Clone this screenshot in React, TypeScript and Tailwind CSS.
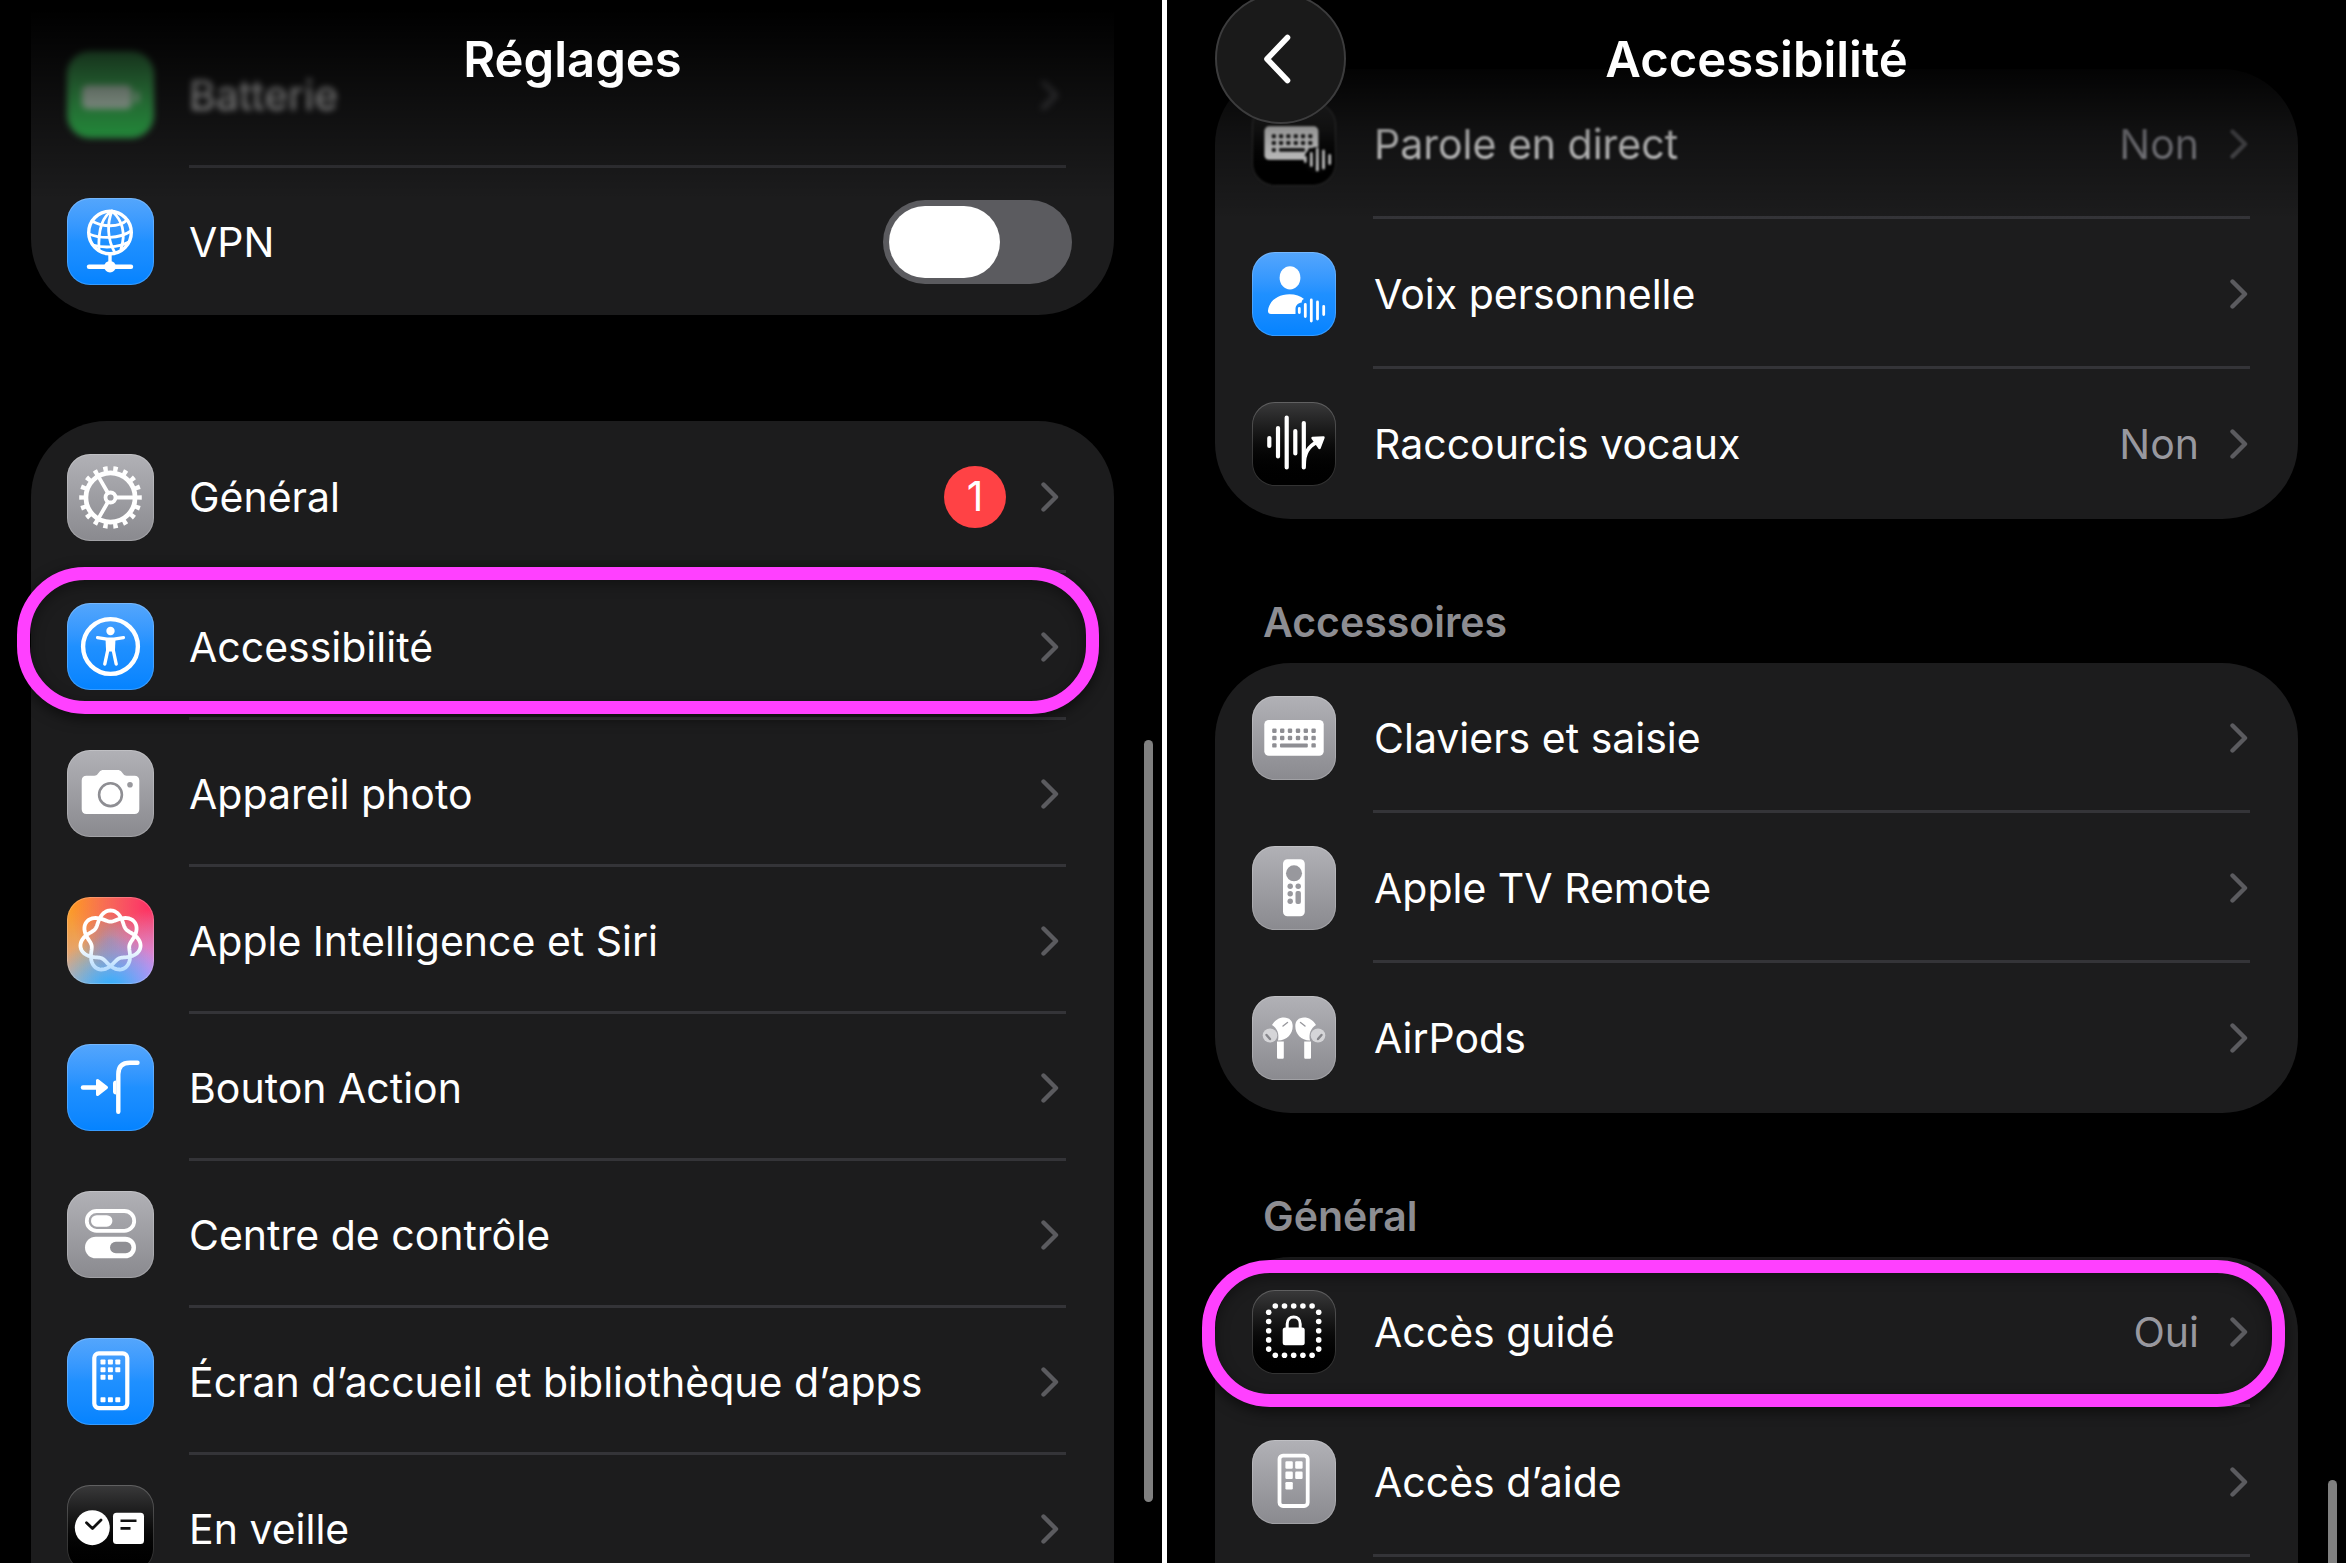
import clsx from 'clsx';
import type { ReactNode } from 'react';

type Tone = 'gray' | 'blue' | 'black' | 'green' | 'siri';

const TONES: Record<Tone, string> = {
    gray: 'bg-linear-to-b from-[#b1b1b6] to-[#8a8a8f]',
    blue: 'bg-linear-to-b from-[#54a6fc] via-[#1f90ff] to-[#0483ff]',
    black: 'bg-linear-to-b from-[#3a3a3b] via-[#0c0c0c] to-black',
    green: 'bg-linear-to-b from-[#5bd675] to-[#30c552]',
    siri: 'bg-[radial-gradient(circle_at_50%_110%,#1fb0ff_0%,transparent_55%),radial-gradient(circle_at_100%_100%,#d58bff_0%,transparent_60%),radial-gradient(circle_at_50%_50%,#b08a98_0%,transparent_45%),radial-gradient(circle_at_95%_10%,#ff2f63_0%,transparent_70%),radial-gradient(circle_at_5%_5%,#ff9a1f_0%,transparent_75%),linear-gradient(#e0a080,#c8b4c4)]',
};

// seven-lobed closed curve, it goes round twice before it meets itself
const KNOT = Array.from({ length: 240 }, (_, i) => {
    const t = (i / 240) * Math.PI * 4;
    const r = 25 + 5.6 * Math.cos(3.5 * t);
    const x = 43.5 + r * Math.sin(t);
    const y = 44 - r * Math.cos(t);
    return `${i === 0 ? 'M' : 'L'}${x.toFixed(2)} ${y.toFixed(2)}`;
}).join('') + 'Z';

function Glyph({ size = 84, children }: { size?: number; children: ReactNode }) {
    return (
        <svg
            viewBox={`0 0 ${size} ${size}`}
            className="size-full"
            fill="none"
            stroke="#fff"
            strokeLinecap="round"
            strokeLinejoin="round"
            aria-hidden={true}
        >
            {children}
        </svg>
    );
}

const BatteryIcon = () => (
    <Glyph size={87}>
        <g opacity="0.8">
            <rect x="15" y="34" width="50" height="24" rx="6" fill="#fff" stroke="none" />
            <path d="M70 42v8" strokeWidth="4" />
        </g>
    </Glyph>
);

const VpnIcon = () => (
    <Glyph size={87}>
        <g strokeWidth="2.8">
            <circle cx="43" cy="34.5" r="21.3" strokeWidth="3.4" />
            <path d="M45 13C36 18 31 31 32 52M45 13c-5 12-5 28 3 42M45 13c10 9 14 22 9 38" />
            <path d="M25 23c10 6 27 7 35-1M22 36c12 5 30 5 42-3M26 47c10 3 24 3 36-3" />
        </g>
        <path d="M43 57v10" strokeWidth="3.4" />
        <path d="M22 68.7h42" strokeWidth="4.4" />
        <circle cx="43" cy="68.7" r="5.8" fill="#fff" stroke="none" />
    </Glyph>
);

const GearIcon = () => (
    <Glyph size={87}>
        <circle
            cx="43.5"
            cy="43.5"
            r="28.6"
            strokeWidth="5.4"
            strokeLinecap="butt"
            pathLength="180"
            strokeDasharray="4.4 5.6"
            strokeDashoffset="2.2"
        />
        <circle cx="43.5" cy="43.5" r="24.6" strokeWidth="4.8" />
        <circle cx="43.5" cy="43.5" r="5" strokeWidth="3.8" />
        <path d="M49 43.5h18M40.8 38.7l-9-15.6M40.8 48.3l-9 15.6" strokeWidth="3.8" />
    </Glyph>
);

const AccessibilityIcon = () => (
    <Glyph size={87}>
        <circle cx="43.5" cy="43.5" r="27.4" strokeWidth="4.4" />
        <circle cx="43.5" cy="28" r="4.2" fill="#fff" stroke="none" />
        <path d="M30.5 34.6l9.5 1.6h7l9.5-1.6" strokeWidth="3.2" />
        <path d="M38.5 35.5h10l-.6 13h-8.8z" fill="#fff" stroke="none" />
        <path d="M41 46l-3.2 15M46 46l3.2 15" strokeWidth="3.4" />
    </Glyph>
);

const CameraIcon = () => (
    <Glyph size={87}>
        <path
            d="M19.5 25.7h8c1.5 0 2.3-.6 3.2-1.7l1.6-2c1.2-1.5 2.5-2 4.4-2h13.6c1.9 0 3.2.5 4.4 2l1.6 2c.9 1.1 1.7 1.7 3.2 1.7h8c3 0 4.8 1.8 4.8 4.8v28.7c0 3-1.8 4.8-4.8 4.8h-48c-3 0-4.8-1.8-4.8-4.8V30.5c0-3 1.8-4.8 4.8-4.8z"
            fill="#fff"
            stroke="none"
        />
        <circle cx="43.5" cy="44.7" r="11.4" stroke="#8e8e93" strokeWidth="2.6" />
        <circle cx="63" cy="34.7" r="2.8" fill="#98989d" stroke="none" />
    </Glyph>
);

const SiriIcon = () => (
    <Glyph size={87}>
        <defs>
            <linearGradient id="knot" x1="0" y1="0" x2="0" y2="1">
                <stop offset="0.6" stopColor="#fff" />
                <stop offset="1" stopColor="#b5dcff" />
            </linearGradient>
        </defs>
        <path d={KNOT} stroke="url(#knot)" strokeWidth="3.8" />
    </Glyph>
);

const ActionIcon = () => (
    <Glyph size={87}>
        <path d="M16 43.5h18" strokeWidth="4.4" />
        <path d="M30.5 36.5v14l9-7z" fill="#fff" strokeWidth="3" />
        <path d="M70.5 18.7H63c-8 0-11.7 4-11.7 11.5v37.6" strokeWidth="4.4" />
        <path d="M49 36.5c-2 0-3 1.2-3 3v8c0 1.8 1 3 3 3z" fill="#fff" stroke="none" />
    </Glyph>
);

const ControlIcon = () => (
    <Glyph size={87}>
        <rect x="19.8" y="20" width="47.4" height="19.8" rx="9.9" strokeWidth="3.8" />
        <rect x="24" y="24.2" width="21.4" height="11.5" rx="5.7" fill="#fff" stroke="none" />
        <rect x="18" y="45.7" width="51" height="21.6" rx="10.8" fill="#fff" stroke="none" />
        <rect x="43" y="50.7" width="21.5" height="11.6" rx="5.8" fill="#8f8f94" stroke="none" />
    </Glyph>
);

const HomeScreenIcon = () => (
    <Glyph size={87}>
        <rect x="27.3" y="15.3" width="33" height="54.8" rx="4.5" strokeWidth="4.2" />
        <g fill="#fff" stroke="none">
            {[24, 31.7, 39.3, 61.7].map((y, row) =>
                [36, 43.4, 50.8].map((x, col) =>
                    row === 2 && col === 2 ? null : (
                        <rect key={`${x}-${y}`} x={x - 2.5} y={y - 2.5} width="5" height="5" rx="0.8" />
                    ),
                ),
            )}
        </g>
    </Glyph>
);

const StandByIcon = () => (
    <Glyph size={87}>
        <circle cx="25.3" cy="42.7" r="17.5" fill="#fff" stroke="none" />
        <path d="M19.5 37.8l6 5.7 8.5-8.5" stroke="#111" strokeWidth="2.8" />
        <rect x="46" y="27.7" width="31" height="31.3" rx="3.5" fill="#fff" stroke="none" />
        <path d="M53.5 35.7h16M53.5 43.4h10" stroke="#111" strokeWidth="2.6" strokeLinecap="butt" />
    </Glyph>
);

const SmallWave = () => (
    <path d="M47.3 56.5v4M53.3 52.5v12M59.3 48v21M65.5 50v17M71.7 54.5v8" strokeWidth="2.8" />
);

function Keys({ fill }: { fill: string }) {
    return (
        <g fill={fill} stroke="none">
            {[34.7, 42].map((y) =>
                [22.4, 30.2, 38, 46, 53.8, 61.6].map((x) => (
                    <rect key={`${x}-${y}`} x={x - 2.2} y={y - 2.2} width="4.4" height="4.4" rx="1.2" />
                )),
            )}
            <rect x="20.2" y="47.2" width="4.4" height="4.4" rx="1.2" />
            <rect x="28" y="47.4" width="27.8" height="4" rx="1" />
            <rect x="59.4" y="47.2" width="4.4" height="4.4" rx="1.2" />
        </g>
    );
}

const LiveSpeechIcon = () => (
    <Glyph>
        <g transform="translate(1 2) scale(.93)">
            <rect x="12.3" y="24" width="58" height="36" rx="5" fill="#fff" stroke="none" />
            <Keys fill="#222" />
        </g>
        <circle cx="65" cy="58" r="13" fill="#060606" stroke="none" />
        <g transform="translate(6 -1)">
            <SmallWave />
        </g>
    </Glyph>
);

const PersonalVoiceIcon = () => (
    <Glyph>
        <ellipse cx="38" cy="25.8" rx="10.4" ry="11.6" fill="#fff" stroke="none" />
        <path
            d="M16 58.5C17 49 26 42.3 37.5 42.3c6 0 11 1.8 14.5 4.7-1.5.5-2.3 1.8-2.3 3.5-3.5.3-6.2 3-6.2 6.5v5H19c-2 0-3.2-1.3-3-3.5z"
            fill="#fff"
            stroke="none"
        />
        <SmallWave />
    </Glyph>
);

const VocalShortcutsIcon = () => (
    <Glyph>
        <path d="M17.3 36v8M26 26v28.5M34.7 15.5v50M43.3 29v22.5M51.8 21v44.5" strokeWidth="4.2" />
        <path d="M52 63c0-12 4-18.5 13-23" strokeWidth="4" />
        <path d="M60.5 36l11-.5-4 10.5z" fill="#fff" strokeWidth="2.4" />
    </Glyph>
);

const KeyboardIcon = () => (
    <Glyph>
        <rect x="12.3" y="24" width="59.4" height="35.8" rx="4.5" fill="#fff" stroke="none" />
        <Keys fill="#8e8e93" />
    </Glyph>
);

const RemoteIcon = () => (
    <Glyph>
        <rect x="31" y="13.3" width="21.8" height="57" rx="4.5" fill="#fff" stroke="none" />
        <g fill="#98989d" stroke="none">
            <circle cx="42" cy="27.3" r="8" />
            <circle cx="38.2" cy="40.3" r="2.7" />
            <circle cx="46.2" cy="40.3" r="2.7" />
            <circle cx="38.2" cy="47.7" r="2.7" />
            <circle cx="38.2" cy="55.2" r="2.7" />
            <rect x="43.5" y="45" width="5.4" height="13" rx="2" />
        </g>
    </Glyph>
);

const Pod = () => (
    <>
        <path
            d="M20 29c3-5 7-7.5 12-7.5 5.5 0 8.7 3.5 8.7 8.5C40.7 38 35 44.5 26 44.5c1.5-7-1-12.5-6-15.5z"
            fill="#fff"
            stroke="none"
        />
        <path d="M25 45.5h6.8v15.7c0 1-.5 1.5-1.5 1.5h-3.8c-1 0-1.5-.5-1.5-1.5z" fill="#fff" stroke="none" />
        <ellipse cx="18" cy="39.5" rx="7.3" ry="7" fill="#d5d5d8" stroke="none" />
        <path d="M14.5 39l3.5 4" stroke="#85858a" strokeWidth="2.4" />
        <path d="M31 30l4.5-3.5" stroke="#98989d" strokeWidth="1.4" />
    </>
);

const AirPodsIcon = () => (
    <Glyph>
        <Pod />
        <g transform="translate(84 0) scale(-1 1)">
            <Pod />
        </g>
    </Glyph>
);

const GuidedAccessIcon = () => (
    <Glyph>
        <g fill="#fff" stroke="none">
            {[23.3, 32.5, 41.7, 50.9, 60.1].map((p) => (
                <g key={p}>
                    <circle cx={p} cy="16" r="2.8" />
                    <circle cx={p} cy="65.3" r="2.8" />
                    <circle cx="16.7" cy={p - 1} r="2.8" />
                    <circle cx="66.7" cy={p - 1} r="2.8" />
                </g>
            ))}
            <rect x="30.7" y="37.5" width="22" height="17.7" rx="2.5" />
        </g>
        <path d="M35.2 38v-4c0-4.5 2.7-7 6.5-7s6.5 2.5 6.5 7v4" strokeWidth="3" />
    </Glyph>
);

const AssistiveIcon = () => (
    <Glyph>
        <rect x="27.5" y="15.6" width="28.2" height="50.4" rx="3.5" strokeWidth="3.8" />
        <g fill="#fff" stroke="none">
            <rect x="33.4" y="21.3" width="7.4" height="7.4" rx="1.2" />
            <rect x="43.2" y="21.3" width="7.4" height="7.4" rx="1.2" />
            <rect x="33.4" y="31.6" width="7.4" height="7.4" rx="1.2" />
            <rect x="43.2" y="31.6" width="7.4" height="7.4" rx="1.2" />
            <rect x="33.4" y="42" width="7.4" height="7.4" rx="1.2" />
        </g>
    </Glyph>
);

function Chevron() {
    return (
        <svg viewBox="0 0 18 30" className="h-[30px] w-[18px] shrink-0" fill="none" aria-hidden={true}>
            <path
                d="M2.5 2.5L15 15 2.5 27.5"
                stroke="#5b5b5f"
                strokeWidth="4.4"
                strokeLinecap="round"
                strokeLinejoin="round"
            />
        </svg>
    );
}

function Tile({ tone, className, children }: { tone: Tone; className: string; children: ReactNode }) {
    return (
        <span
            className={clsx(
                'shrink-0 overflow-hidden rounded-[23px] shadow-[inset_0_0_0_1px_rgba(255,255,255,0.2)]',
                TONES[tone],
                className,
            )}
        >
            {children}
        </span>
    );
}

interface Item {
    label: string;
    tone: Tone;
    icon: ReactNode;
    badge?: number;
    value?: string;
    marked?: boolean;
    faded?: string;
    toggle?: boolean;
}

const ROW = 'relative flex items-center';
const LABEL = 'min-w-0 flex-1 truncate text-[41px] leading-[60px]';
const LINE = 'absolute right-12 bottom-0 left-[158px] h-[3px] bg-[#343438] group-last:hidden';
const MARK =
    'pointer-events-none absolute z-10 rounded-[68px] border-[13px] border-[#ff40ff] shadow-[0_4px_14px_rgba(0,0,0,0.6),inset_0_4px_14px_rgba(0,0,0,0.4)]';

function SettingsRow({ label, tone, icon, badge, marked, faded, toggle }: Item) {
    const Wrapper = toggle ? 'label' : 'a';

    return (
        <li className="group relative">
            <Wrapper
                href={toggle ? undefined : '#'}
                className={clsx(ROW, 'min-h-[147px] gap-[35px] pl-9', toggle ? 'pr-[42px]' : 'pr-[55px]', faded)}
            >
                <Tile tone={tone} className="size-[87px]">
                    {icon}
                </Tile>
                <span className={LABEL}>{label}</span>
                {badge !== undefined && (
                    <span className="py-[45px]">
                        <span className="flex size-[62px] items-center justify-center rounded-full bg-[#ff4245] text-[41px]">
                            {badge}
                        </span>
                    </span>
                )}
                {toggle ? (
                    <input
                        type="checkbox"
                        role="switch"
                        className="h-[84px] w-[189px] shrink-0 appearance-none rounded-full bg-[#5b5b5f] p-1.5 before:block before:h-[72px] before:w-[111px] before:rounded-full before:bg-white checked:bg-[#30d158] checked:before:ml-auto"
                    />
                ) : (
                    <Chevron />
                )}
            </Wrapper>
            <div className={LINE} />
            {marked && <div className={clsx(MARK, '-top-1.5 right-[15px] bottom-1.5 -left-3.5')} />}
        </li>
    );
}

function AccessRow({ label, tone, icon, value, marked, faded }: Item) {
    return (
        <li className="group relative">
            <a href="#" className={clsx(ROW, 'min-h-[150px] pr-[50px] pl-[37px]', faded)}>
                <Tile tone={tone} className="mr-[38px] size-[84px]">
                    {icon}
                </Tile>
                <span className={LABEL}>{label}</span>
                {value && <span className="mr-[31px] text-[41px] leading-[60px] text-[#98989f]">{value}</span>}
                <Chevron />
            </a>
            <div className={LINE} />
            {marked && <div className={clsx(MARK, 'top-[3px] right-[13px] bottom-0 -left-[13px]')} />}
        </li>
    );
}

const CONNECTIONS: Item[] = [
    { label: 'Batterie', tone: 'green', icon: <BatteryIcon />, faded: 'blur-[3px]' },
    { label: 'VPN', tone: 'blue', icon: <VpnIcon />, toggle: true },
];

const SETTINGS: Item[] = [
    { label: 'Général', tone: 'gray', icon: <GearIcon />, badge: 1 },
    { label: 'Accessibilité', tone: 'blue', icon: <AccessibilityIcon />, marked: true },
    { label: 'Appareil photo', tone: 'gray', icon: <CameraIcon /> },
    { label: 'Apple Intelligence et Siri', tone: 'siri', icon: <SiriIcon /> },
    { label: 'Bouton Action', tone: 'blue', icon: <ActionIcon /> },
    { label: 'Centre de contrôle', tone: 'gray', icon: <ControlIcon /> },
    { label: 'Écran d’accueil et bibliothèque d’apps', tone: 'blue', icon: <HomeScreenIcon /> },
    { label: 'En veille', tone: 'black', icon: <StandByIcon /> },
];

const SPEECH: Item[] = [
    { label: 'Parole en direct', tone: 'black', icon: <LiveSpeechIcon />, value: 'Non', faded: 'blur-[1px]' },
    { label: 'Voix personnelle', tone: 'blue', icon: <PersonalVoiceIcon /> },
    { label: 'Raccourcis vocaux', tone: 'black', icon: <VocalShortcutsIcon />, value: 'Non' },
];

const ACCESSORIES: Item[] = [
    { label: 'Claviers et saisie', tone: 'gray', icon: <KeyboardIcon /> },
    { label: 'Apple TV Remote', tone: 'gray', icon: <RemoteIcon /> },
    { label: 'AirPods', tone: 'gray', icon: <AirPodsIcon /> },
];

const GENERAL: Item[] = [
    { label: 'Accès guidé', tone: 'black', icon: <GuidedAccessIcon />, value: 'Oui', marked: true },
    { label: 'Accès d’aide', tone: 'gray', icon: <AssistiveIcon /> },
];

const CARD = 'bg-[#1c1c1d]';
const HEADER = 'pointer-events-none absolute inset-x-0 top-0 z-20 bg-linear-to-b from-black to-transparent pt-[30px]';
const TITLE = 'text-center text-[49px] leading-[60px] font-semibold';
const HEADING = 'px-12 pt-[73px] pb-[11px] text-[41px] leading-[60px] font-semibold text-[#8d8d92]';

function SettingsScreen() {
    return (
        <section className="relative overflow-hidden bg-black pr-12 pl-[31px]">
            <header className={clsx(HEADER, 'h-[200px] from-5% via-black/50 via-50% pr-12 pl-[31px]')}>
                <h1 className={TITLE}>Réglages</h1>
            </header>

            <ul className={clsx(CARD, 'rounded-b-[76px] pt-[21px]')}>
                {CONNECTIONS.map((item) => (
                    <SettingsRow key={item.label} {...item} />
                ))}
            </ul>

            <ul className={clsx(CARD, 'mt-[106px] rounded-t-[76px] pb-9')}>
                {SETTINGS.map((item) => (
                    <SettingsRow key={item.label} {...item} />
                ))}
            </ul>

            <div className="absolute top-[740px] right-[9px] h-[762px] w-[9px] rounded-full bg-[#808080]" />
        </section>
    );
}

function AccessibilityScreen() {
    return (
        <section className="relative overflow-hidden bg-black px-12 pt-[69px]">
            <header className={clsx(HEADER, 'h-[220px] from-25% via-black/40 via-60% px-12')}>
                <h1 className={TITLE}>Accessibilité</h1>
                <button
                    type="button"
                    aria-label="Retour"
                    className="pointer-events-auto absolute -top-[7px] left-12 flex size-[131px] items-center justify-center rounded-full border-2 border-[#3c3c3d] bg-[#1a1a1a]"
                >
                    <svg viewBox="0 0 28 50" className="mr-2 h-[50px] w-7" fill="none" aria-hidden={true}>
                        <path
                            d="M24.5 3.5L4 25l20.5 21.5"
                            stroke="#fff"
                            strokeWidth="5.6"
                            strokeLinecap="round"
                            strokeLinejoin="round"
                        />
                    </svg>
                </button>
            </header>

            <ul className={clsx(CARD, 'rounded-[76px]')}>
                {SPEECH.map((item) => (
                    <AccessRow key={item.label} {...item} />
                ))}
            </ul>

            <h2 className={HEADING}>Accessoires</h2>
            <ul className={clsx(CARD, 'rounded-[76px]')}>
                {ACCESSORIES.map((item) => (
                    <AccessRow key={item.label} {...item} />
                ))}
            </ul>

            <h2 className={HEADING}>Général</h2>
            <ul className={clsx(CARD, 'rounded-t-[76px]')}>
                {GENERAL.map((item) => (
                    <AccessRow key={item.label} {...item} />
                ))}
                <li className="h-[150px]" />
            </ul>

            <div className="absolute top-[1480px] right-[9px] h-[300px] w-[9px] rounded-full bg-[#808080]" />
        </section>
    );
}

export default function App() {
    return (
        <main className="grid h-screen grid-cols-[1162fr_5px_1179fr] overflow-hidden bg-white font-['Inter',sans-serif] text-white">
            <SettingsScreen />
            <div />
            <AccessibilityScreen />
        </main>
    );
}
